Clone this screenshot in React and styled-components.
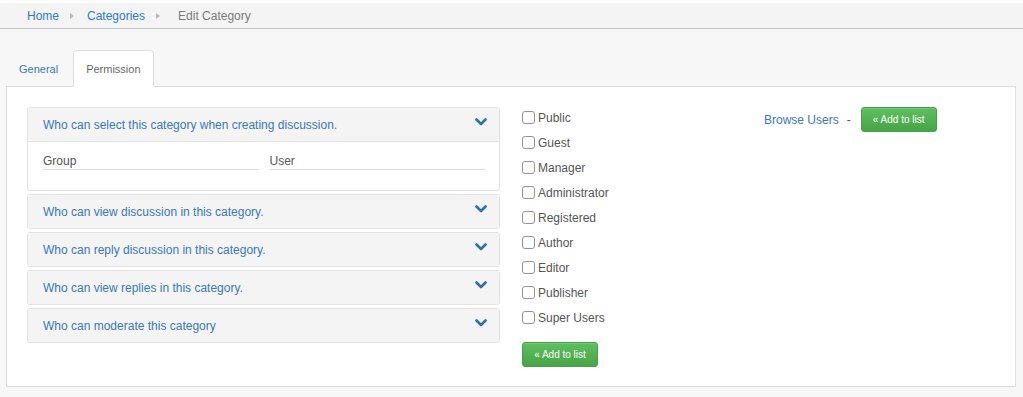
import React from "react";
import styled, { createGlobalStyle } from "styled-components";

const Global = createGlobalStyle`
  html, body { margin: 0; padding: 0; }
  body {
    background: #f7f7f7;
    font-family: "Liberation Sans", Arial, sans-serif;
    font-size: 12px;
    color: #555;
  }
  * { box-sizing: border-box; }
`;

const Breadcrumb = styled.nav`
  display: flex;
  align-items: center;
  height: 29px;
  border-top: 3px solid #fdfdfd;
  border-bottom: 1px solid #c6c6c6;
  background: #f4f4f4;
  padding-left: 27px;
  font-size: 12px;
`;

const Crumb = styled.a`
  color: ${(p) => (p.$active ? "#7a7a7a" : "#2b7bcf")};
  text-decoration: none;
`;

const Sep = styled.span`
  display: inline-block;
  width: 0;
  height: 0;
  margin: 0 ${(p) => p.$mr || 14}px 0 11px;
  border-top: 3px solid transparent;
  border-bottom: 3px solid transparent;
  border-left: 4px solid #b8b8b8;
`;

const Main = styled.div`
  padding: 21px 7px 9px 6px;
`;

const Tabs = styled.ul`
  display: flex;
  list-style: none;
  margin: 0 0 -1px 0;
  padding: 0;
  position: relative;
  z-index: 1;
`;

const Tab = styled.li`
  height: 37px;
  display: flex;
  align-items: center;
  padding: 0 12px;
  margin-right: 2px;
  font-size: 11px;
  border: 1px solid ${(p) => (p.$active ? "#dcdcdc" : "transparent")};
  border-bottom-color: ${(p) => (p.$active ? "#fff" : "transparent")};
  border-radius: 4px 4px 0 0;
  background: ${(p) => (p.$active ? "#fff" : "transparent")};
  color: ${(p) => (p.$active ? "#666" : "#3a78b8")};
`;

const Panel = styled.div`
  background: #fff;
  border: 1px solid #dcdcdc;
  padding: 20px 20px 19px 20px;
  display: flex;
  min-height: 301px;
`;

const LeftCol = styled.div`
  width: 473px;
  flex: none;
`;

const MidCol = styled.div`
  width: 242px;
  margin-left: 22px;
  margin-top: -2px;
  flex: none;
`;

const RightCol = styled.div`
  display: flex;
  align-items: center;
  height: 25px;
`;

const Acc = styled.div`
  border: 1px solid #e2e2e2;
  border-radius: 3px;
  margin-bottom: 3px;
  overflow: hidden;
`;

const AccHead = styled.div`
  height: ${(p) => (p.$open ? 34 : 33)}px;
  display: flex;
  align-items: center;
  justify-content: space-between;
  padding: 0 12px 0 15px;
  background: #f4f4f4;
  color: #3a78b8;
  font-size: 12px;
  border-bottom: ${(p) => (p.$open ? "1px solid #e2e2e2" : "none")};
`;

const Chevron = styled.svg`
  width: 12px;
  height: 8px;
  margin-top: -5px;
`;

const AccBody = styled.div`
  display: flex;
  gap: 11px;
  padding: 8px 14px 0 15px;
  height: 48px;
`;

const Field = styled.div`
  flex: 1;
  height: 20px;
  padding-top: 3px;
  border-bottom: 1px solid #dcdcdc;
  color: #555;
  font-size: 12px;
  line-height: 17px;
`;

const CheckRow = styled.label`
  display: flex;
  align-items: center;
  height: 25px;
  font-size: 12px;
  color: #555;
`;

const Box = styled.span`
  width: 13px;
  height: 13px;
  border: 1px solid #939393;
  border-radius: 3px;
  background: #fff;
  margin-right: 3px;
  flex: none;
`;

const GreenButton = styled.button`
  height: 25px;
  width: 76px;
  padding: 0;
  border: 1px solid #43a047;
  border-radius: 3px;
  background: linear-gradient(#5fbf5f, #47a447);
  color: #fff;
  font-family: "Liberation Sans", Arial, sans-serif;
  font-size: 10px;
  margin-top: ${(p) => p.$mt || 0}px;
  margin-left: ${(p) => p.$ml || 0}px;
  box-shadow: inset 0 1px 0 rgba(255,255,255,0.15);
`;

const Link = styled.a`
  color: #3a78b8;
  font-size: 12px;
  text-decoration: none;
`;

const Dash = styled.span`
  margin-left: 8px;
  color: #555;
`;

const groups = [
  "Public",
  "Guest",
  "Manager",
  "Administrator",
  "Registered",
  "Author",
  "Editor",
  "Publisher",
  "Super Users",
];

const sections = [
  "Who can view discussion in this category.",
  "Who can reply discussion in this category.",
  "Who can view replies in this category.",
  "Who can moderate this category",
];

const ChevronIcon = () => (
  <Chevron viewBox="0 0 12 8">
    <polyline
      points="1.5,1.5 6,6 10.5,1.5"
      fill="none"
      stroke="#2f6fae"
      strokeWidth="2.6"
      strokeLinecap="round"
      strokeLinejoin="round"
    />
  </Chevron>
);

export default function App() {
  return (
    <>
      <Global />
      <Breadcrumb>
        <Crumb>Home</Crumb>
        <Sep $mr={13} />
        <Crumb>Categories</Crumb>
        <Sep $mr={18} />
        <Crumb $active>Edit Category</Crumb>
      </Breadcrumb>
      <Main>
        <Tabs>
          <Tab>General</Tab>
          <Tab $active>Permission</Tab>
        </Tabs>
        <Panel>
          <LeftCol>
            <Acc>
              <AccHead $open>
                <span>Who can select this category when creating discussion.</span>
                <ChevronIcon />
              </AccHead>
              <AccBody>
                <Field>Group</Field>
                <Field>User</Field>
              </AccBody>
            </Acc>
            {sections.map((s) => (
              <Acc key={s}>
                <AccHead>
                  <span>{s}</span>
                  <ChevronIcon />
                </AccHead>
              </Acc>
            ))}
          </LeftCol>
          <MidCol>
            {groups.map((g) => (
              <CheckRow key={g}>
                <Box />
                {g}
              </CheckRow>
            ))}
            <GreenButton $mt={12}>« Add to list</GreenButton>
          </MidCol>
          <RightCol>
            <Link>Browse Users</Link>
            <Dash>-</Dash>
            <GreenButton $ml={10}>« Add to list</GreenButton>
          </RightCol>
        </Panel>
      </Main>
    </>
  );
}
